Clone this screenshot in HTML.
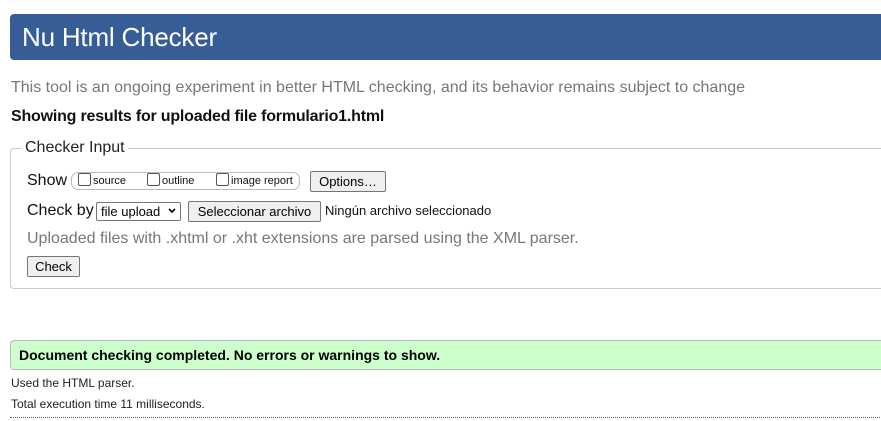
<!DOCTYPE html>
<html><head><meta charset="utf-8"><style>
body{margin:0;width:881px;height:421px;overflow:hidden;background:#fff;font-family:"Liberation Sans",Arial,sans-serif;position:relative}
.a{position:absolute;white-space:nowrap}
.btn{position:absolute;background:#efefef;border:1px solid #767676;border-radius:2px;font-size:13px;color:#000;box-sizing:border-box;text-align:center}
.cb{display:inline-block;width:11px;height:11px;border:1px solid #555;border-radius:2px;vertical-align:-2px;margin-right:2px;background:#fff}
</style></head><body>
<div class="a" style="left:10px;top:14px;width:880px;height:46px;background:#365d95;border-radius:4px 0 0 4px"></div>
<div class="a" style="left:22px;top:22px;font-size:26px;color:#fff;line-height:30px;letter-spacing:-0.2px">Nu Html Checker</div>
<div class="a" style="left:11px;top:79px;font-size:16px;color:#777;line-height:18px">This tool is an ongoing experiment in better HTML checking, and its behavior remains subject to change</div>
<div class="a" style="left:11px;top:108px;font-size:16px;font-weight:bold;color:#111;line-height:18px;letter-spacing:-0.2px">Showing results for uploaded file formulario1.html</div>
<div class="a" style="left:10px;top:148px;width:880px;height:141px;border:1px solid #ccc;border-right:none;border-radius:4px 0 0 4px;box-sizing:border-box"></div>
<div class="a" style="left:22px;top:139px;padding:0 3px;background:#fff;font-size:16px;color:#222;line-height:18px">Checker Input</div>
<div class="a" style="left:27px;top:172px;font-size:16px;color:#111;line-height:18px">Show</div>
<div class="a" style="left:71px;top:172px;width:229px;height:18px;border:1px solid #bbb;border-radius:7px;box-sizing:border-box"></div>
<div class="a" style="left:78px;top:173px;font-size:11px;color:#111;line-height:16px"><span class="cb"></span>source</div>
<div class="a" style="left:147px;top:173px;font-size:11px;color:#111;line-height:16px"><span class="cb"></span>outline</div>
<div class="a" style="left:216px;top:173px;font-size:11px;color:#111;line-height:16px"><span class="cb"></span>image report</div>
<div class="btn" style="left:310px;top:171px;width:76px;height:21px;line-height:19px">Options…</div>
<div class="a" style="left:27px;top:202px;font-size:16px;color:#111;line-height:18px">Check by</div>
<div class="a" style="left:96px;top:202px;width:85px;height:19px;border:1px solid #767676;border-radius:2px;box-sizing:border-box;font-size:13px;line-height:17px;padding-left:4px">file upload</div>
<div class="a" style="left:168px;top:208px;width:8px;height:6px"><svg width="8" height="6" style="display:block"><path d="M1 1L4 4L7 1" stroke="#000" stroke-width="1.6" fill="none"/></svg></div>
<div class="btn" style="left:188px;top:201px;width:133px;height:21px;line-height:19px">Seleccionar archivo</div>
<div class="a" style="left:325px;top:203px;font-size:13px;color:#111;line-height:16px">Ningún archivo seleccionado</div>
<div class="a" style="left:27px;top:230px;font-size:16px;color:#777;line-height:18px">Uploaded files with .xhtml or .xht extensions are parsed using the XML parser.</div>
<div class="btn" style="left:27px;top:256px;width:53px;height:21px;line-height:19px">Check</div>
<div class="a" style="left:10px;top:340px;width:880px;height:30px;background:#ccffcc;border:1px solid #bbb;border-right:none;border-radius:4px 0 0 4px;box-sizing:border-box"></div>
<div class="a" style="left:19px;top:346px;font-size:14px;font-weight:bold;color:#000;line-height:18px">Document checking completed. No errors or warnings to show.</div>
<div class="a" style="left:11px;top:376px;font-size:12px;color:#222;line-height:14px">Used the HTML parser.</div>
<div class="a" style="left:11px;top:397px;font-size:12px;color:#222;line-height:14px">Total execution time 11 milliseconds.</div>
<div class="a" style="left:10px;top:417px;width:880px;border-top:1px dotted #666"></div>
</body></html>
